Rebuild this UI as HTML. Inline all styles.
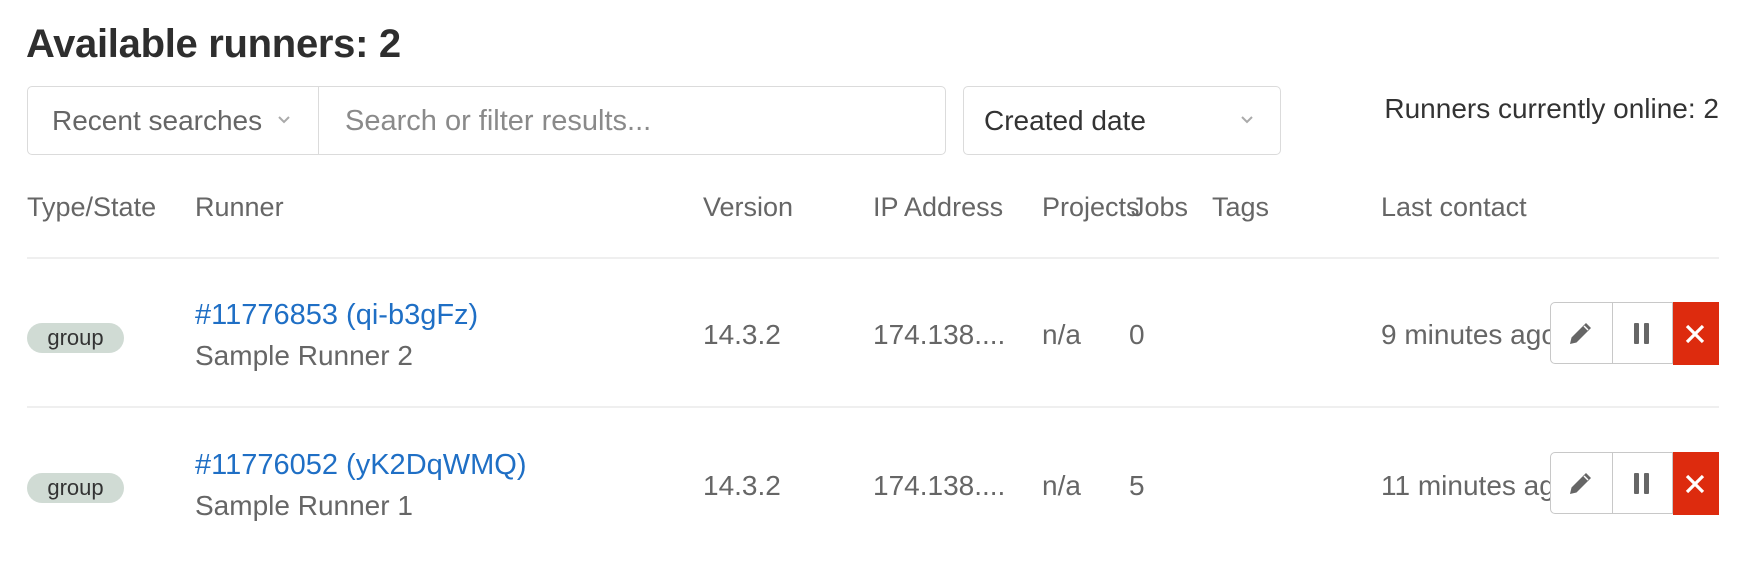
<!DOCTYPE html>
<html><head><meta charset="utf-8"><style>
*{margin:0;padding:0;box-sizing:border-box}
body{width:1762px;height:570px;background:#fff;font-family:"Liberation Sans",Arial,sans-serif;color:#666;position:relative;overflow:hidden}
.a{position:absolute;white-space:nowrap;line-height:30px;font-size:28px}
h1{position:absolute;left:26px;top:22px;font-size:40px;font-weight:bold;color:#2e2e2e;line-height:44px;letter-spacing:-0.3px}
.box{position:absolute;border:1px solid #dbdbdb;border-radius:5px;background:#fff}
.hr{position:absolute;left:27px;width:1692px;height:2px;background:#efefef}
.badge{position:absolute;left:27px;width:97px;height:30px;border-radius:15px;background:#d0dbd4;color:#333;font-size:22px;line-height:30px;text-align:center}
.link{color:#1f6fc5;font-size:29px}
.h{font-size:27px}
.btns{position:absolute;left:1550px;width:169px;height:62px}
.b{position:absolute;top:0;height:62px;border:1px solid #c8c8c8;background:#fff}
</style></head><body>
<h1>Available runners: 2</h1>

<div class="box" style="left:27px;top:86px;width:919px;height:69px"></div>
<div style="position:absolute;left:318px;top:87px;width:1px;height:67px;background:#dbdbdb"></div>
<div class="a" style="left:52px;top:106px;color:#666">Recent searches</div>
<svg style="position:absolute;left:277px;top:115px" width="14" height="10" viewBox="0 0 14 10"><path d="M2 2l5 5 5-5" fill="none" stroke="#aaa" stroke-width="2"/></svg>
<div class="a" style="left:345px;top:106px;color:#8a8a8a;font-size:29px">Search or filter results...</div>

<div class="box" style="left:963px;top:86px;width:318px;height:69px"></div>
<div class="a" style="left:984px;top:106px;color:#333">Created date</div>
<svg style="position:absolute;left:1240px;top:115px" width="14" height="10" viewBox="0 0 14 10"><path d="M2 2l5 5 5-5" fill="none" stroke="#aaa" stroke-width="2"/></svg>

<div class="a" style="right:43px;top:94px;color:#333;font-size:28px">Runners currently online: 2</div>

<div class="a h" style="left:27px;top:192px">Type/State</div>
<div class="a h" style="left:195px;top:192px">Runner</div>
<div class="a h" style="left:703px;top:192px">Version</div>
<div class="a h" style="left:873px;top:192px">IP Address</div>
<div class="a h" style="left:1042px;top:192px">Projects</div>
<div class="a h" style="left:1131px;top:192px">Jobs</div>
<div class="a h" style="left:1212px;top:192px">Tags</div>
<div class="a h" style="left:1381px;top:192px">Last contact</div>
<div class="hr" style="top:257px"></div>

<div class="badge" style="top:323px">group</div>
<div class="a link" style="left:195px;top:300px">#11776853 (qi-b3gFz)</div>
<div class="a" style="left:195px;top:341px">Sample Runner 2</div>
<div class="a" style="left:703px;top:320px">14.3.2</div>
<div class="a" style="left:873px;top:320px">174.138....</div>
<div class="a" style="left:1042px;top:320px">n/a</div>
<div class="a" style="left:1129px;top:320px">0</div>
<div class="a" style="left:1381px;top:320px;width:169px;overflow:hidden">9 minutes ago</div>

<div class="hr" style="top:406px"></div>

<div class="badge" style="top:473px">group</div>
<div class="a link" style="left:195px;top:450px">#11776052 (yK2DqWMQ)</div>
<div class="a" style="left:195px;top:491px">Sample Runner 1</div>
<div class="a" style="left:703px;top:471px">14.3.2</div>
<div class="a" style="left:873px;top:471px">174.138....</div>
<div class="a" style="left:1042px;top:471px">n/a</div>
<div class="a" style="left:1129px;top:471px">5</div>
<div class="a" style="left:1381px;top:471px;width:169px;overflow:hidden">11 minutes ago</div>

<div class="btns" style="top:302px">
 <div class="b" style="left:0;width:63px;border-radius:5px 0 0 5px"></div>
 <div class="b" style="left:62px;width:61px"></div>
 <div style="position:absolute;left:123px;top:0;width:46px;height:63px;background:#dd2b0e"></div>
 <svg style="position:absolute;left:15px;top:15px" width="32" height="32" viewBox="0 0 32 32"><path d="M5 27l1.5-6.5L21 6l5 5L11.5 25.5z" fill="#666"/><path d="M19 9l4 4" stroke="#fff" stroke-width="1.5"/></svg>
 <div style="position:absolute;left:84px;top:21px;width:5px;height:21px;background:#666;border-radius:1px"></div>
 <div style="position:absolute;left:94px;top:21px;width:5px;height:21px;background:#666;border-radius:1px"></div>
 <svg style="position:absolute;left:134px;top:21px" width="22" height="22" viewBox="0 0 22 22"><path d="M3 3l16 16M19 3L3 19" stroke="#fff" stroke-width="3.2"/></svg>
</div>
<div class="btns" style="top:452px">
 <div class="b" style="left:0;width:63px;border-radius:5px 0 0 5px"></div>
 <div class="b" style="left:62px;width:61px"></div>
 <div style="position:absolute;left:123px;top:0;width:46px;height:63px;background:#dd2b0e"></div>
 <svg style="position:absolute;left:15px;top:15px" width="32" height="32" viewBox="0 0 32 32"><path d="M5 27l1.5-6.5L21 6l5 5L11.5 25.5z" fill="#666"/><path d="M19 9l4 4" stroke="#fff" stroke-width="1.5"/></svg>
 <div style="position:absolute;left:84px;top:21px;width:5px;height:21px;background:#666;border-radius:1px"></div>
 <div style="position:absolute;left:94px;top:21px;width:5px;height:21px;background:#666;border-radius:1px"></div>
 <svg style="position:absolute;left:134px;top:21px" width="22" height="22" viewBox="0 0 22 22"><path d="M3 3l16 16M19 3L3 19" stroke="#fff" stroke-width="3.2"/></svg>
</div>
</body></html>
